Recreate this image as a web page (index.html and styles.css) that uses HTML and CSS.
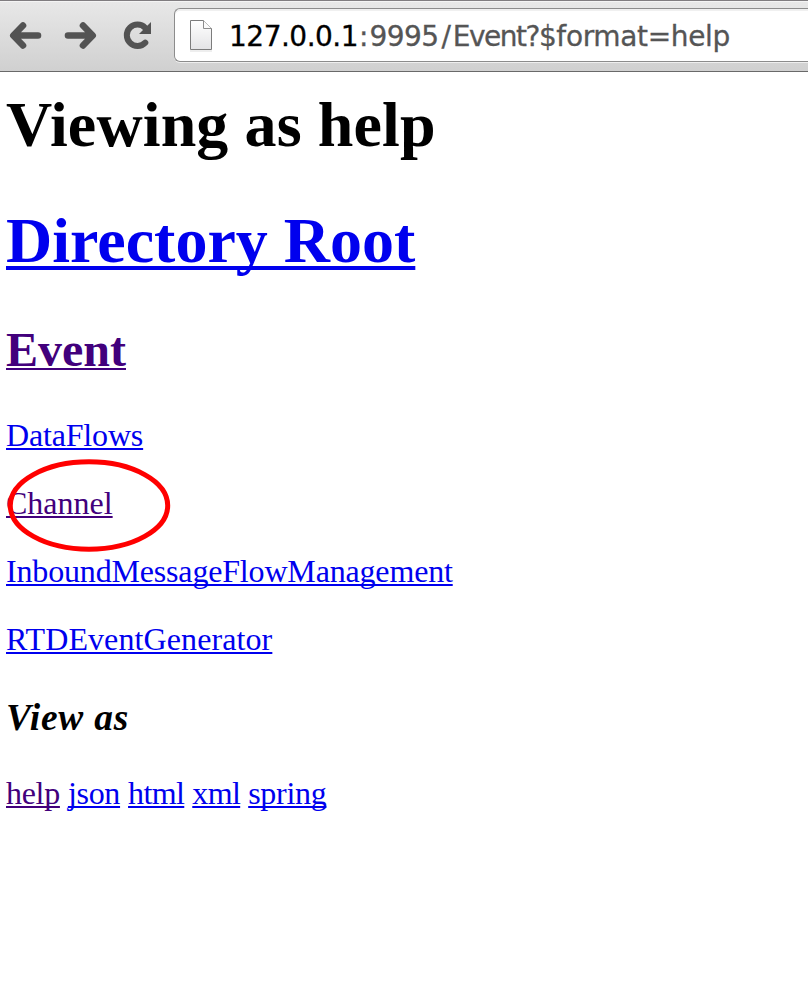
FILE: index.html
```html
<!DOCTYPE html>
<html lang="en">
<head>
<meta charset="utf-8">
<title>Viewing as help</title>
<link rel="stylesheet" href="styles.css">
</head>
<body>
<header class="toolbar">
  <svg class="nav" width="174" height="68" viewBox="0 2 174 68" fill="none" stroke="#535353" stroke-width="6.6" stroke-linecap="round" stroke-linejoin="round">
    <path d="M38 35.5H14M23 25.5L13.3 35.5L23 45.5"/>
    <path d="M68 35.5H92M83 25.5L92.7 35.5L83 45.5"/>
    <path d="M145.3 42.6A10.7 10.7 0 1 1 145.2 27.8" stroke-width="6"/>
    <path d="M151 22V34H139Z" fill="#535353" stroke="none"/>
  </svg>
  <div class="address">
    <svg class="page-icon" width="24" height="34" viewBox="0 0 24 34">
      <defs><linearGradient id="paper" x2="0" y2="1"><stop stop-color="#fff"/><stop offset="1" stop-color="#e4e4e6"/></linearGradient></defs>
      <path d="M1 32H23" stroke="#ddd"/>
      <path d="M1.5 1.5H14.5L22.5 9.5V30.5H1.5Z" fill="url(#paper)" stroke="#7c7c7c"/>
      <path d="M14.5 1.5V9.5H22.5" fill="#fafafa" stroke="#8c8c8c"/>
    </svg>
    <span class="url"><span class="host">127.0.0.1</span><span class="colon">:</span><span class="port">9995</span><span class="slash">/</span><span class="resource">Event?</span><span class="query">$format=help</span></span>
  </div>
</header>
<main class="content">
  <h1 class="title">Viewing as help</h1>
  <h1><a href="#">Directory Root</a></h1>
  <h2><a class="seen" href="#">Event</a></h2>
  <p><a class="snug" href="#">DataFlows</a></p>
  <p class="marked"><a class="seen" href="#">Channel</a>
    <svg class="ring" width="164" height="94" viewBox="0 0 164 94"><ellipse cx="82" cy="47.5" rx="78.7" ry="43.7" fill="none" stroke="red" stroke-width="5"/></svg>
  </p>
  <p><a class="snug" href="#">InboundMessageFlowManagement</a></p>
  <p><a class="loose" href="#">RTDEventGenerator</a></p>
  <h3>View as</h3>
  <p class="formats"><a class="seen" href="#">help</a><a href="#">json</a><a class="tight" href="#">html</a><a class="tight" href="#">xml</a><a href="#">spring</a></p>
</main>
</body>
</html>
```
FILE: styles.css
```css
* { box-sizing: border-box; }
body {
  margin: 0;
  height: 998px;
  overflow: hidden;
  background: #fff;
  color: #000;
  font-family: "Liberation Serif", serif;
}
.toolbar {
  display: flex;
  align-items: flex-start;
  height: 72px;
  border-top: 1px solid #807d80;
  border-bottom: 1px solid #696969;
  background: linear-gradient(#e8e8e8, #d0d0d0);
  box-shadow: inset 0 1px #f4f4f4;
}
.nav { flex: none; margin-top: 1px; }
.address {
  display: flex;
  align-items: center;
  flex: 1;
  height: 54px;
  margin-top: 7px;
  padding: 2px 0 0 14px;
  border: 1px solid #8c8c8c;
  border-right: 0;
  border-radius: 6px 0 0 6px;
  background: #fff;
  box-shadow: inset 0 2px #f0f0f0, 0 1px #efefef;
}
.page-icon { flex: none; margin-right: 16px; }
.url {
  display: flex;
  padding-top: 2px;
  font: 28px/34px "DejaVu Sans", sans-serif;
  white-space: pre;
  color: #555;
  -webkit-text-stroke: 0.3px;
}
.host { letter-spacing: -0.5px; color: #000; }
.colon { margin: 0 1px; }
.port { letter-spacing: -0.6px; }
.slash { margin: 0 2px 0 3px; }
.resource { letter-spacing: -1.5px; }
.query { letter-spacing: -0.35px; }
.content { padding: 16px 6px 0; }
h1, h2, h3, p { margin: 0; }
h1 { font-size: 64px; line-height: 74px; margin-bottom: 42px; }
h2 { font-size: 48px; line-height: 56px; margin: 44px 0 39px; }
h3 { font-size: 37.44px; line-height: 42px; font-style: italic; letter-spacing: 0.8px; margin: 39px 0 37px; padding-top: 1px; height: 42px; }
p { font-size: 32px; line-height: 36px; margin-bottom: 32px; }
a {
  color: #0000ee;
  text-decoration: underline 2px;
  text-underline-offset: 2px;
  text-decoration-skip-ink: none;
}
h1 a { text-decoration-thickness: 4px; text-underline-offset: 4px; }
.title { letter-spacing: 0.12px; }
.seen { color: #42007c; }
.snug { letter-spacing: -0.17px; }
.loose { letter-spacing: 0.1px; }
.formats { display: flex; gap: 8px; letter-spacing: -0.3px; }
.tight { letter-spacing: -0.62px; }
.marked { position: relative; }
.ring { position: absolute; left: 1px; top: -27px; }
```
